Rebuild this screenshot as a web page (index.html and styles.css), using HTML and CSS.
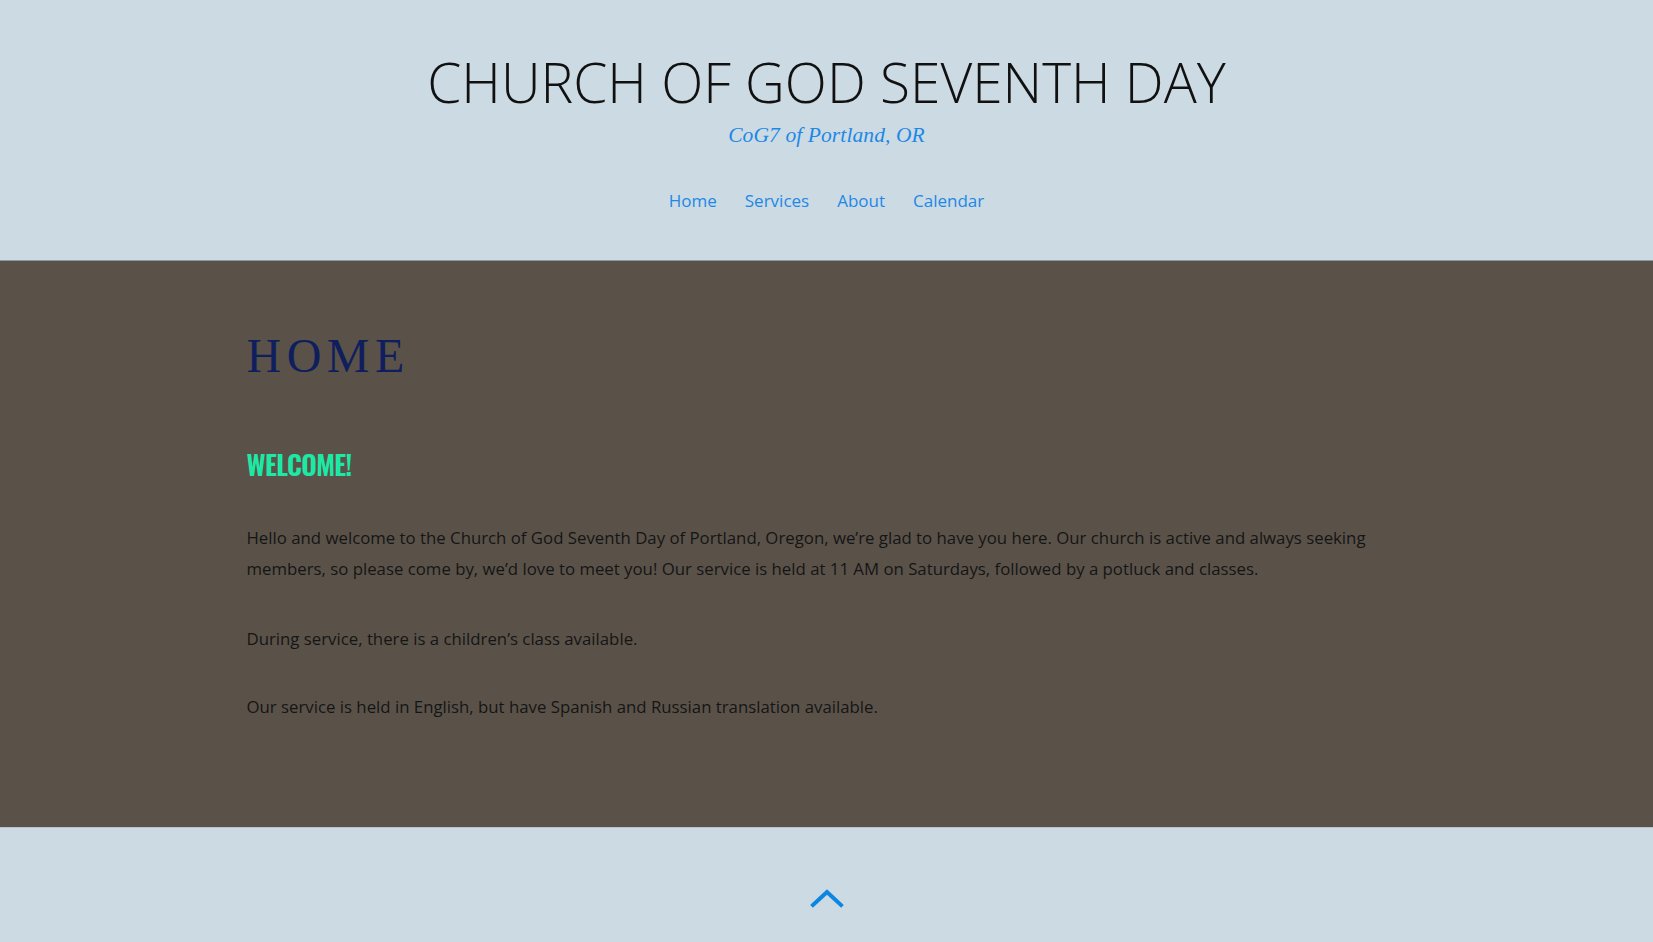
FILE: index.html
```
<!DOCTYPE html>
<html lang="en">
<head>
<meta charset="utf-8">
<title>Church of God Seventh Day</title>
<link rel="stylesheet" href="styles.css">
</head>
<body>
<header class="site-header">
  <h1 class="site-title">CHURCH OF GOD SEVENTH DAY</h1>
  <p class="site-tagline">CoG7 of Portland, OR</p>
  <nav class="site-nav">
    <a href="#" class="nav-link">Home</a>
    <a href="#" class="nav-link">Services</a>
    <a href="#" class="nav-link">About</a>
    <a href="#" class="nav-link">Calendar</a>
  </nav>
</header>
<main class="page-main">
  <div class="container">
    <h2 class="page-title">HOME</h2>
    <h3 class="section-title">WELCOME!</h3>
    <p class="body-text">Hello and welcome to the Church of God Seventh Day of Portland, Oregon, we’re glad to have you here. Our church is active and always seeking members, so please come by, we’d love to meet you! Our service is held at 11 AM on Saturdays, followed by a potluck and classes.</p>
    <p class="body-text">During service, there is a children’s class available.</p>
    <p class="body-text body-text-last">Our service is held in English, but have Spanish and Russian translation available.</p>
  </div>
</main>
<footer class="site-footer">
  <a href="#" class="to-top" aria-label="Back to top">
    <svg width="34" height="20" viewBox="0 0 34 20"><path d="M3 17 L17 4 L31 17" fill="none" stroke="#0b86e3" stroke-width="4" stroke-linecap="square"/></svg>
  </a>
</footer>
</body>
</html>
```
FILE: styles.css
```
html, body {
  margin: 0;
  padding: 0;
}
body {
  background: #ccdae3;
  font-family: "Open Sans", "Liberation Sans", sans-serif;
}
.site-header {
  background: #ccdae3;
  text-align: center;
  padding: 48px 0 0;
  height: 212px;
  border-bottom: 1px solid #8d9aa3;
}
.site-title {
  margin: 0;
  font-family: "Open Sans", sans-serif;
  font-weight: 300;
  font-size: 55px;
  line-height: 68px;
  letter-spacing: 0;
  color: #111;
}
.site-tagline {
  margin: 5px 0 0;
  font-family: "Liberation Serif", serif;
  font-style: italic;
  font-size: 21.5px;
  line-height: 28px;
  letter-spacing: 0.1px;
  color: #1e88e5;
}
.site-nav {
  margin-top: 40px;
  display: flex;
  justify-content: center;
  gap: 28px;
}
.nav-link {
  font-size: 17px;
  line-height: 24px;
  color: #1e88e5;
  text-decoration: none;
}
.page-main {
  background: #5a5249;
  height: 566px;
  border-bottom: 1px solid #b8c2c8;
}
.container {
  width: 1160px;
  margin: 0 auto;
  padding-top: 65px;
}
.page-title {
  margin: 0;
  font-family: "Liberation Serif", serif;
  font-weight: 400;
  font-size: 48px;
  line-height: 60px;
  letter-spacing: 5.5px;
  color: #0f1e5c;
}
.section-title {
  margin: 60px 0 0;
  font-family: Oswald, "Liberation Sans Narrow", "DejaVu Sans Condensed", sans-serif;
  font-weight: 600;
  font-size: 27px;
  line-height: 36px;
  color: #1de9a6;
  letter-spacing: -0.6px;
}
.body-text {
  margin: 40px 0 0;
  font-size: 16.8px;
  line-height: 31px;
  color: #151515;
}
.body-text + .body-text {
  margin-top: 39px;
}
.body-text + .body-text-last {
  margin-top: 37px;
}
.site-footer {
  display: flex;
  justify-content: center;
  padding-top: 60px;
  height: 54px;
}
.to-top {
  display: block;
  line-height: 0;
}
```
